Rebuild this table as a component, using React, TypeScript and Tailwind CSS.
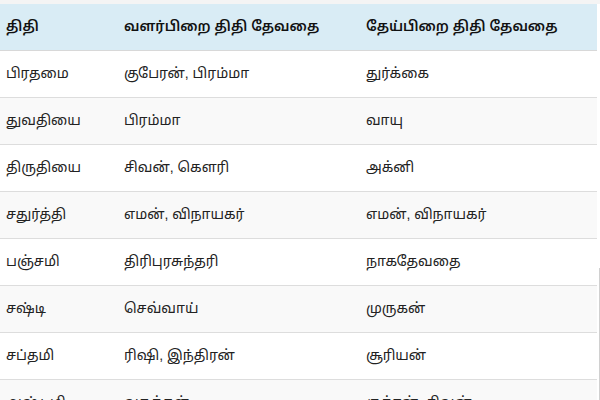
import React from "react";

const rows: [string, string, string][] = [
  ["பிரதமை", "குபேரன், பிரம்மா", "துர்க்கை"],
  ["துவதியை", "பிரம்மா", "வாயு"],
  ["திருதியை", "சிவன், கௌரி", "அக்னி"],
  ["சதுர்த்தி", "எமன், விநாயகர்", "எமன், விநாயகர்"],
  ["பஞ்சமி", "திரிபுரசுந்தரி", "நாகதேவதை"],
  ["சஷ்டி", "செவ்வாய்", "முருகன்"],
  ["சப்தமி", "ரிஷி, இந்திரன்", "சூரியன்"],
  ["அஷ்டமி", "வசுக்கள்", "ருத்ரன், சிவன்"],
];

export default function App() {
  return (
    <div className="relative w-[600px] h-[400px] overflow-hidden bg-white" style={{ fontFamily: '"Liberation Sans", "Noto Sans Tamil", "Noto Sans", sans-serif' }}>
      <div className="h-[4px] bg-[#f4f4f4]" />
      <div className="flex">
        <table className="w-[597px] border-collapse text-[14px] text-[#222]">
          <thead>
            <tr className="bg-[#d9ecf5] h-[46px] border-b border-[#d8d8d8]">
              <th className="w-[118px] text-left font-semibold pl-[6px] text-[#111]">திதி</th>
              <th className="w-[242px] text-left font-semibold pl-[6px] text-[#111]">வளர்பிறை திதி தேவதை</th>
              <th className="text-left font-semibold pl-[6px] text-[#111]">தேய்பிறை திதி தேவதை</th>
            </tr>
          </thead>
          <tbody>
            {rows.map((r, i) => (
              <tr key={i} className={`h-[47px] border-b border-[#dddddd] ${i % 2 === 1 ? "bg-[#f9f9f9]" : "bg-white"}`}>
                <td className="pl-[6px]">{r[0]}</td>
                <td className="pl-[6px]">{r[1]}</td>
                <td className="pl-[6px]">{r[2]}</td>
              </tr>
            ))}
          </tbody>
        </table>
        <div className="w-[3px]" />
      </div>
      <div className="absolute right-0 top-[268px] bottom-0 w-px bg-[#d0d0d0]" />
    </div>
  );
}
